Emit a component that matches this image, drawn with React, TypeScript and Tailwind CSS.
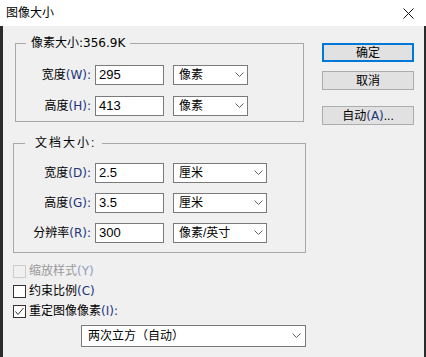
import React from "react";

const font = { fontFamily: '"Liberation Sans", "Noto Sans CJK SC", sans-serif' };
const latin = { fontFamily: '"DejaVu Sans", "Noto Sans CJK SC", sans-serif' };

function Chevron() {
  return (
    <svg width="9" height="6" viewBox="0 0 9 6" className="shrink-0">
      <polyline points="0.5,0.5 4.5,4.5 8.5,0.5" fill="none" stroke="#606060" strokeWidth="1" />
    </svg>
  );
}

function Key({ k }: { k: string }) {
  return (
    <span className="text-[#22337a]" style={latin}>
      {k}
    </span>
  );
}

function Select({ value, width }: { value: string; width: string }) {
  return (
    <div
      className={`ml-[9px] flex h-[20px] items-center justify-between border border-[#7a7a7a] bg-white pl-[5px] pr-[3px] text-[12px] text-black ${width}`}
    >
      <span>{value}</span>
      <Chevron />
    </div>
  );
}

function FieldRow({
  label,
  keyName,
  value,
  unit,
  labelWidth,
  selectWidth,
}: {
  label: string;
  keyName: string;
  value: string;
  unit: string;
  labelWidth: string;
  selectWidth: string;
}) {
  return (
    <div className="flex items-center">
      <div className={`whitespace-nowrap text-right text-[12px] text-black ${labelWidth}`}>
        {label}
        <Key k={`(${keyName}):`} />
      </div>
      <div className="ml-[4px] flex h-[20px] w-[69px] items-center border border-[#7a7a7a] bg-white pl-[3px] text-[13px] text-black">
        {value}
      </div>
      <Select value={unit} width={selectWidth} />
    </div>
  );
}

function Button({ children, primary }: { children: React.ReactNode; primary?: boolean }) {
  return (
    <button
      className={`flex h-[19px] w-[92px] items-center justify-center bg-[#e1e1e1] text-[12px] text-black ${
        primary ? "border-2 border-[#0078d7]" : "border border-[#adadad]"
      }`}
    >
      {children}
    </button>
  );
}

function Check({ checked, disabled }: { checked?: boolean; disabled?: boolean }) {
  return (
    <div
      className={`flex h-[13px] w-[13px] items-center justify-center border ${
        disabled ? "border-[#cccccc] bg-[#f0f0f0]" : "border-[#333333] bg-white"
      }`}
    >
      {checked && (
        <svg width="11" height="11" viewBox="0 0 11 11">
          <polyline points="1.5,5.5 4,8.5 9.5,2" fill="none" stroke="#333333" strokeWidth="1" />
        </svg>
      )}
    </div>
  );
}

export default function App() {
  return (
    <div className="h-[357px] w-[426px] overflow-hidden bg-[#f0f0f0]" style={font}>
      {/* title bar */}
      <div className="flex h-[26px] items-center justify-between bg-white pl-[6px] pr-[12px]">
        <span className="text-[12px] text-black">图像大小</span>
        <svg width="11" height="11" viewBox="0 0 11 11">
          <path d="M0.5 0.5 L10.5 10.5 M10.5 0.5 L0.5 10.5" stroke="#111" strokeWidth="1" />
        </svg>
      </div>

      <div className="flex h-[331px] border-l-[3px] border-r-2 border-l-[#2b2b2b] border-r-[#2b2b2b]">
        {/* left column */}
        <div className="flex w-[303px] flex-col pl-[10px]">
          <fieldset className="ml-[2px] mt-[9px] w-[289px] border border-[#a8a8a8] pb-[5px]">
            <legend className="ml-[10px] px-[5px] text-[12px] leading-[16px] text-black">
              像素大小<span style={latin}>:356.9K</span>
            </legend>
            <div className="flex flex-col gap-[11px] pt-[14px]">
              <FieldRow label="宽度" keyName="W" value="295" unit="像素" labelWidth="w-[75px]" selectWidth="w-[75px]" />
              <FieldRow label="高度" keyName="H" value="413" unit="像素" labelWidth="w-[75px]" selectWidth="w-[75px]" />
            </div>
          </fieldset>

          <fieldset className="mt-[13px] w-[293px] border border-[#a8a8a8] pb-[9px]">
            <legend className="ml-[11px] pl-[10px] pr-[6px] text-[12px] leading-[16px] tracking-[2px] text-black">
              文档大小:
            </legend>
            <div className="flex flex-col gap-[10px] pt-[12px]">
              <FieldRow label="宽度" keyName="D" value="2.5" unit="厘米" labelWidth="w-[77px]" selectWidth="w-[94px]" />
              <FieldRow label="高度" keyName="G" value="3.5" unit="厘米" labelWidth="w-[77px]" selectWidth="w-[94px]" />
              <FieldRow label="分辨率" keyName="R" value="300" unit="像素/英寸" labelWidth="w-[77px]" selectWidth="w-[94px]" />
            </div>
          </fieldset>

          <div className="mt-[8px] flex flex-col">
            <div className="flex h-[20px] items-center gap-[3px] text-[12px] text-[#9a9a9a]">
              <Check disabled />
              <span>
                缩放样式
                <span className="text-[#8f9cc0]" style={latin}>
                  (Y)
                </span>
              </span>
            </div>
            <div className="flex h-[20px] items-center gap-[3px] text-[12px] text-black">
              <Check />
              <span>
                约束比例<Key k="(C)" />
              </span>
            </div>
            <div className="flex h-[20px] items-center gap-[3px] text-[12px] text-black">
              <Check checked />
              <span>
                重定图像像素<Key k="(I):" />
              </span>
            </div>
            <div className="ml-[68px] mt-[4px] flex h-[22px] w-[225px] items-center justify-between border border-[#7a7a7a] bg-white pl-[6px] pr-[4px] text-[12px] text-black">
              <span>两次立方（自动）</span>
              <Chevron />
            </div>
          </div>
        </div>

        {/* right column */}
        <div className="flex flex-col pl-[16px] pt-[17px]">
          <Button primary>确定</Button>
          <div className="mt-[9px]">
            <Button>取消</Button>
          </div>
          <div className="mt-[16px]">
            <Button>
              自动<Key k="(A)" />...
            </Button>
          </div>
        </div>
      </div>
    </div>
  );
}
